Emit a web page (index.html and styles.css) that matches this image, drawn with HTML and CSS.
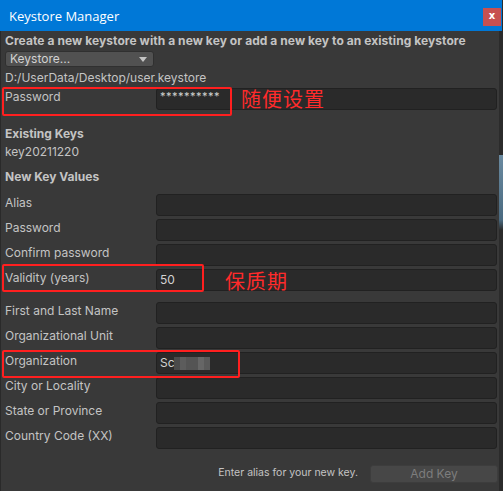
FILE: index.html
```html
<!DOCTYPE html>
<html>
<head>
<meta charset="utf-8">
<link rel="stylesheet" href="styles.css">
</head>
<body>
<div class="screen">
  <div class="window">
    <div class="titlebar">
      <span class="title">Keystore Manager</span>
      <span class="close">x</span>
    </div>
    <div class="content">
      <div class="intro">Create a new keystore with a new key or add a new key to an existing keystore</div>
      <div class="dropdown"><span>Keystore...</span><span class="arrow"></span></div>
      <div class="path">D:/UserData/Desktop/user.keystore</div>
      <div class="row pw-row"><span class="label">Password</span><span class="field"><span class="stars">**********</span></span></div>

      <div class="heading existing">Existing Keys</div>
      <div class="keyname">key20211220</div>
      <div class="heading newkeys">New Key Values</div>

      <div class="group group1">
        <div class="row"><span class="label">Alias</span><span class="field"></span></div>
        <div class="row"><span class="label">Password</span><span class="field"></span></div>
        <div class="row"><span class="label">Confirm password</span><span class="field"></span></div>
        <div class="row"><span class="label">Validity (years)</span><span class="field">50</span></div>
      </div>

      <div class="group group2">
        <div class="row"><span class="label">First and Last Name</span><span class="field"></span></div>
        <div class="row"><span class="label">Organizational Unit</span><span class="field"></span></div>
        <div class="row"><span class="label">Organization</span><span class="field">Sc<span class="blur"></span></span></div>
        <div class="row"><span class="label">City or Locality</span><span class="field"></span></div>
        <div class="row"><span class="label">State or Province</span><span class="field"></span></div>
        <div class="row"><span class="label">Country Code (XX)</span><span class="field"></span></div>
      </div>

      <div class="footer">
        <span class="hint">Enter alias for your new key.</span>
        <span class="btn">Add Key</span>
      </div>
    </div>

    <div class="mark mark1"></div>
    <div class="note note1">随便设置</div>
    <div class="mark mark2"></div>
    <div class="note note2">保质期</div>
    <div class="mark mark3"></div>
  </div>
  <div class="edge"></div>
</div>
</body>
</html>
```
FILE: styles.css
```css
html, body {
  margin: 0;
  padding: 0;
  background: #262626;
}
.screen {
  display: flex;
  width: 503px;
  height: 491px;
  overflow: hidden;
}
.window {
  position: relative;
  width: 499px;
  height: 491px;
  background: #393939;
  font-family: Inter, "Noto Sans", sans-serif;
  font-size: 12px;
  color: #c4c4c4;
  border-left: 1px solid #2a2a2a;
  box-sizing: border-box;
}
.edge {
  width: 4px;
  height: 491px;
  background: linear-gradient(#2b2b2b 0, #2b2b2b 155px, #6a8aa0 155px, #4a6a80 220px, #2b2b2b 230px);
}
.titlebar {
  height: 31px;
  background: #0078d7;
  display: flex;
  align-items: center;
  justify-content: space-between;
  padding: 0 1px 0 9px;
  margin-left: -1px;
  margin-right: -3px;
}
.title {
  font-family: "Open Sans", "Noto Sans", sans-serif;
  font-size: 13px;
  color: #ffffff;
}
.close {
  width: 18px;
  height: 18px;
  margin-top: 3px;
  background: #c75050;
  color: #fff;
  font-family: "DejaVu Sans", sans-serif;
  font-weight: bold;
  font-size: 10px;
  line-height: 16px;
  text-align: center;
}
.content {
  padding: 0 0 0 4px;
}
.intro {
  margin-top: 2px;
  line-height: 16px;
  font-weight: bold;
  letter-spacing: 0.07px;
}
.dropdown {
  margin-top: 2px;
  width: 149px;
  height: 16px;
  box-sizing: border-box;
  background: #515151;
  border: 1px solid #303030;
  border-radius: 3px;
  display: flex;
  align-items: center;
  justify-content: space-between;
  padding: 0 6px 0 4px;
  line-height: 14px;
  color: #d2d2d2;
}
.arrow {
  width: 0;
  height: 0;
  border-left: 4px solid transparent;
  border-right: 4px solid transparent;
  border-top: 5px solid #c4c4c4;
}
.path {
  margin-top: 3px;
  line-height: 16px;
}
.row {
  display: grid;
  grid-template-columns: 151px 341px;
  height: 22px;
  align-items: start;
}
.label {
  padding-top: 1px;
  line-height: 16px;
}
.field {
  height: 22px;
  box-sizing: border-box;
  background: #2a2a2a;
  border: 1px solid #212121;
  border-radius: 3px;
  padding: 0 3px;
  line-height: 20px;
  color: #d2d2d2;
  display: flex;
  align-items: center;
}
.pw-row {
  margin-top: 2px;
}
.stars {
  font-size: 11px;
  letter-spacing: 0.5px;
  margin-top: -6px;
}
.heading {
  font-weight: bold;
  line-height: 16px;
}
.existing {
  margin-top: 16px;
}
.keyname {
  margin-top: 2px;
  line-height: 16px;
}
.newkeys {
  margin-top: 9px;
}
.group {
  display: flex;
  flex-direction: column;
  gap: 3px;
}
.group1 {
  margin-top: 9px;
}
.group2 {
  margin-top: 11px;
}
.blur {
  display: inline-block;
  width: 36px;
  height: 13px;
  margin-left: -1px;
  background: linear-gradient(90deg, #4a4a4a 0 6px, #5c5c5c 6px 12px, #545454 12px 24px, #666 24px 30px, #5a5a5a 30px);
}
.footer {
  margin-top: 16px;
  display: flex;
  justify-content: flex-end;
  align-items: center;
  gap: 12px;
  padding-right: 1px;
  width: 493px;
}
.hint {
  font-size: 10.5px;
  color: #c4c4c4;
  margin-top: -3px;
}
.btn {
  width: 128px;
  height: 18px;
  box-sizing: border-box;
  background: #474747;
  border: 1px solid #3d3d3d;
  border-radius: 3px;
  color: #7d7d7d;
  text-align: center;
  line-height: 16px;
}
.mark {
  position: absolute;
  border: 2px solid #ff1f1f;
  border-radius: 2px;
  box-sizing: border-box;
}
.mark1 { left: 1px; top: 87px; width: 230px; height: 29px; }
.mark2 { left: 1px; top: 264px; width: 202px; height: 28px; }
.mark3 { left: 1px; top: 350px; width: 238px; height: 28px; }
.note {
  position: absolute;
  font-family: "Noto Sans CJK SC", sans-serif;
  font-size: 20px;
  line-height: 20px;
  color: #ff2b2b;
  letter-spacing: 1px;
}
.note1 { left: 240px; top: 89px; }
.note2 { left: 224px; top: 271px; }
```
